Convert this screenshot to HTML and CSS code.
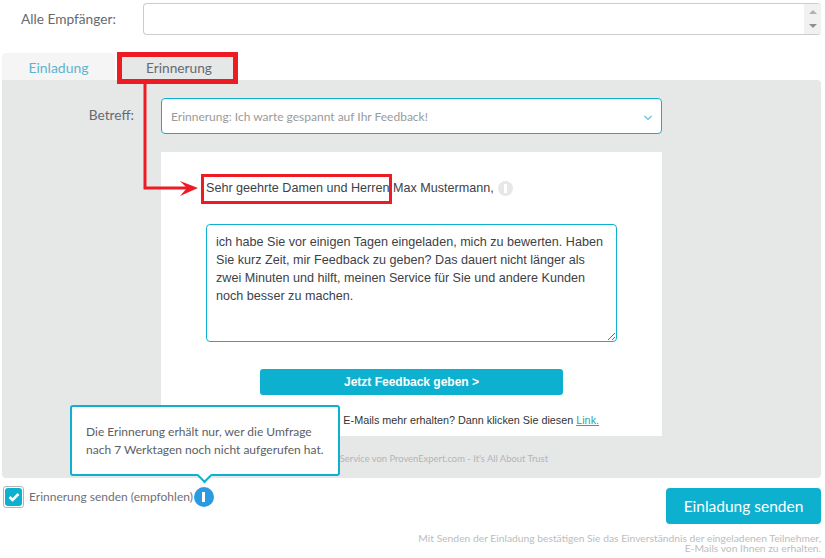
FILE: index.html
```html
<!DOCTYPE html>
<html lang="de">
<head>
<meta charset="utf-8">
<title>Erinnerung</title>
<link rel="stylesheet" href="styles.css">
</head>
<body>
<div class="page">
  <div class="recipients">
    <label class="recipients-label">Alle Empfänger:</label>
    <div class="recipients-field">
      <textarea class="recipients-input"></textarea>
      <div class="scrollbar"><span class="arrow-up"></span><span class="arrow-down"></span></div>
    </div>
  </div>
  <div class="tabs">
    <div class="tab tab-inactive">Einladung</div>
    <div class="tab tab-active">Erinnerung</div>
  </div>
  <div class="panel">
    <div class="subject-row">
      <div class="subject-label">Betreff:</div>
      <div class="subject-select">
        <span>Erinnerung: Ich warte gespannt auf Ihr Feedback!</span>
        <svg class="chevron" width="10" height="6" viewBox="0 0 10 6"><path d="M1.5 1 L5 4.5 L8.5 1" fill="none" stroke="#5fc3d8" stroke-width="1.2"/></svg>
      </div>
    </div>
    <div class="mail">
      <div class="greeting">Sehr geehrte Damen und Herren Max Mustermann,<span class="info-small"><span class="info-bar-small"></span></span></div>
      <textarea class="body-text">ich habe Sie vor einigen Tagen eingeladen, mich zu bewerten. Haben Sie kurz Zeit, mir Feedback zu geben? Das dauert nicht länger als zwei Minuten und hilft, meinen Service für Sie und andere Kunden noch besser zu machen.</textarea>
      <div class="cta">Jetzt Feedback geben &gt;</div>
      <div class="unsubscribe">Sie wollen von mir keine E-Mails mehr erhalten? Dann klicken Sie diesen <a href="#">Link.</a></div>
    </div>
    <div class="service">Ein kostenloser Service von ProvenExpert.com - It's All About Trust</div>
  </div>
  <div class="bottom">
    <div class="check-row">
      <span class="check-box"><span class="check-fill"><svg width="12" height="10" viewBox="0 0 12 10"><path d="M1.5 5 L4.5 8 L10.5 2" fill="none" stroke="#fff" stroke-width="2.6"/></svg></span></span>
      <span class="check-label">Erinnerung senden (empfohlen)</span>
      <span class="info-big"><span class="info-bar-big"></span></span>
    </div>
    <div class="send">Einladung senden</div>
  </div>
  <div class="legal">Mit Senden der Einladung bestätigen Sie das Einverständnis der eingeladenen Teilnehmer,<br>E-Mails von Ihnen zu erhalten.</div>

  <div class="tooltip">Die Erinnerung erhält nur, wer die Umfrage<br>nach 7 Werktagen noch nicht aufgerufen hat.<span class="tooltip-tip"></span></div>

  <div class="mark mark-tab"></div>
  <div class="mark mark-greeting"></div>
  <svg class="mark-arrow" width="70" height="112" viewBox="0 0 70 112">
    <path d="M2 0 V104 H48" fill="none" stroke="#ed1c24" stroke-width="3"/>
    <path d="M37 97 L55 104 L37 112 L44 104 Z" fill="#ed1c24"/>
  </svg>
</div>
</body>
</html>
```
FILE: styles.css
```css
* { box-sizing: border-box; }
html, body { margin: 0; padding: 0; background: #fff; }
body { width: 825px; height: 558px; overflow: hidden; font-family: "Lato", "Liberation Sans", sans-serif; }
.page { position: relative; width: 825px; height: 558px; overflow: hidden; padding-top: 3px; }

.recipients { display: flex; align-items: flex-start; margin-right: 4px; }
.recipients-label { width: 143px; padding: 7px 0 0 21px; font-size: 13.7px; line-height: 17px; color: #666a70; }
.recipients-field { flex: 1; height: 32px; display: flex; border: 1px solid #ccc; border-right: 0; border-radius: 4px; background: #fff; overflow: hidden; }
.recipients-input { flex: 1; border: 0; background: transparent; resize: none; margin: 0; outline: none; }
.scrollbar { width: 17px; background: #f1f1f1; display: flex; flex-direction: column; align-items: center; justify-content: space-between; padding: 6px 0 6px; }
.arrow-up { width: 0; height: 0; border: 4px solid transparent; border-top: 0; border-bottom: 4px solid #b0b0b0; }
.arrow-down { width: 0; height: 0; border: 4px solid transparent; border-bottom: 0; border-top: 4px solid #909090; }

.tabs { display: flex; margin: 18px 0 0 2px; height: 27px; }
.tab { font-size: 14px; line-height: 29px; text-align: center; border-radius: 4px 4px 0 0; }
.tab-inactive { width: 113px; background: #f5f5f5; color: #5db4cf; }
.tab-active { width: 115px; margin-left: 6px; padding-left: 1px; font-size: 13.7px; background: #e6e7e7; color: #666a70; }

.panel { margin: 0 4px 0 2px; height: 398px; background: #e6e7e7; border-radius: 0 4px 4px 4px; padding-top: 18px; }
.subject-row { display: flex; }
.subject-label { width: 132px; text-align: right; font-size: 13.7px; line-height: 17px; padding-top: 8px; color: #666a70; }
.subject-select { width: 501px; margin-left: 27px; height: 36px; background: #fff; border: 1px solid #0db1cf; border-radius: 4px; display: flex; align-items: center; justify-content: space-between; padding: 0 9px; font-size: 12px; color: #9a9a9a; }
.chevron { margin: 4px -1px 0 0; }

.mail { width: 501px; height: 284px; margin: 18px 0 0 159px; background: #fff; padding-top: 26px; font-family: "Liberation Sans", Arial, sans-serif; color: #3e4148; }
.greeting { display: flex; align-items: center; padding-left: 45px; font-size: 12.6px; line-height: 20px; }
.info-small { width: 15px; height: 15px; margin-left: 4px; border-radius: 50%; background: #e6e7e7; display: flex; align-items: center; justify-content: center; }
.info-bar-small { width: 3px; height: 9px; background: #fff; }
.body-text { display: block; width: 411px; height: 118px; margin: 26px 0 0 45px; padding: 8px 9px; border: 1px solid #0db1cf; border-radius: 4px; font-family: "Liberation Sans", Arial, sans-serif; font-size: 12.6px; line-height: 18px; color: #3e4148; outline: none; overflow: hidden; resize: both; }
.cta { width: 303px; height: 26px; margin: 27px 0 0 99px; background: #0db1cf; border-radius: 3px; color: #fff; font-size: 12px; font-weight: bold; line-height: 26px; text-align: center; }
.unsubscribe { margin-top: 17px; font-size: 10.8px; line-height: 16px; text-align: center; color: #333; }
.unsubscribe a { color: #2a9fb8; }
.service { margin-top: 16px; padding-left: 159px; width: 660px; text-align: center; font-size: 9.4px; line-height: 14px; color: #b5b5b5; }

.bottom { display: flex; justify-content: space-between; align-items: flex-start; margin: 0 4px 0 3px; }
.check-row { display: flex; align-items: center; margin-top: 8px; height: 22px; }
.check-box { width: 21px; height: 22px; border: 1px solid #b5b5b5; border-radius: 3px; padding: 1px; display: flex; }
.check-fill { flex: 1; background: #0db1cf; border-radius: 3px; display: flex; align-items: center; justify-content: center; }
.check-label { margin-left: 5px; font-size: 12px; line-height: 20px; color: #6f6f78; }
.info-big { width: 20px; height: 20px; margin-left: 1px; border-radius: 50%; background: #2a9be0; display: flex; align-items: center; justify-content: center; }
.info-bar-big { width: 3px; height: 10px; background: #fff; }
.send { width: 155px; height: 36px; margin-top: 10px; background: #0db1cf; border-radius: 4px; color: #fff; font-size: 15.5px; line-height: 36px; text-align: center; }
.legal { margin: 9px 4px 0 0; text-align: right; font-size: 10.3px; line-height: 10px; color: #bdbdbd; }

.tooltip { position: absolute; left: 70px; top: 405px; width: 270px; height: 71px; padding: 16px 0 0 14px; white-space: nowrap; background: #fff; border: 2px solid #0db1cf; border-radius: 3px; font-size: 12px; line-height: 18px; color: #5b5e66; }
.tooltip-tip { position: absolute; left: 127px; bottom: -7px; width: 11px; height: 11px; background: #fff; border-right: 2px solid #0db1cf; border-bottom: 2px solid #0db1cf; transform: rotate(45deg); }

.mark { position: absolute; border-style: solid; border-color: #ed1c24; }
.mark-tab { left: 117px; top: 52px; width: 121px; height: 32px; border-width: 5px; }
.mark-greeting { left: 201px; top: 174px; width: 191px; height: 30px; border-width: 3px; }
.mark-arrow { position: absolute; left: 143px; top: 84px; }
```
